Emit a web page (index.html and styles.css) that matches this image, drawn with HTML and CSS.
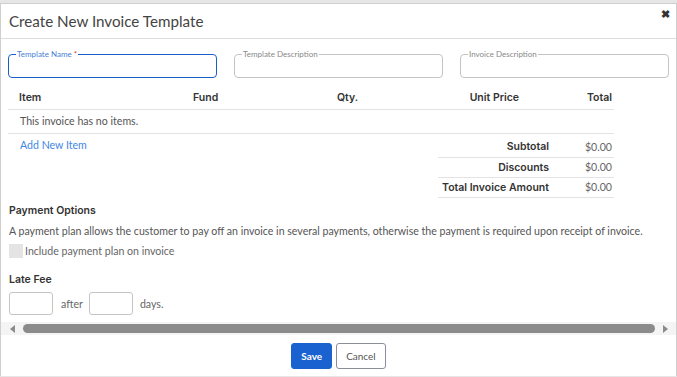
FILE: index.html
```html
<!DOCTYPE html>
<html lang="en">
<head>
    <meta charset="UTF-8">
    <title>Create New Invoice Template</title>
    <link rel="stylesheet" href="styles.css">
</head>
<body>
    <div class="modal">
        <div class="modal-header">
            <h2>Create New Invoice Template</h2>
            <span class="close">&#10006;</span>
        </div>

        <div class="modal-body">
            <div class="fields">
                <fieldset class="field active">
                    <legend>Template Name <span class="req">*</span></legend>
                    <input type="text">
                </fieldset>
                <fieldset class="field">
                    <legend>Template Description</legend>
                    <input type="text">
                </fieldset>
                <fieldset class="field">
                    <legend>Invoice Description</legend>
                    <input type="text">
                </fieldset>
            </div>

            <div class="items">
                <div class="row head">
                    <div class="c-item">Item</div>
                    <div class="c-fund">Fund</div>
                    <div class="c-qty">Qty.</div>
                    <div class="c-price">Unit Price</div>
                    <div class="c-total">Total</div>
                </div>
                <div class="row empty">
                    <div class="c-item">This invoice has no items.</div>
                </div>

                <div class="foot">
                    <a href="#" class="add-link">Add New Item</a>
                    <div class="summary">
                        <div class="sum-row"><span class="sum-label">Subtotal</span><span class="sum-val">$0.00</span></div>
                        <div class="sum-row"><span class="sum-label">Discounts</span><span class="sum-val">$0.00</span></div>
                        <div class="sum-row"><span class="sum-label">Total Invoice Amount</span><span class="sum-val">$0.00</span></div>
                    </div>
                </div>
            </div>

            <h4 class="section">Payment Options</h4>
            <p class="note">A payment plan allows the customer to pay off an invoice in several payments, otherwise the payment is required upon receipt of invoice.</p>
            <label class="check">
                <span class="box"></span>
                Include payment plan on invoice
            </label>

            <h4 class="section late">Late Fee</h4>
            <div class="late-row">
                <input type="text" class="small">
                <span class="after">after</span>
                <input type="text" class="small">
                <span class="days">days.</span>
            </div>
        </div>

        <!-- horizontal scrollbar of the body -->
        <div class="hscroll">
            <span class="arrow left"></span>
            <div class="thumb"></div>
            <span class="arrow right"></span>
        </div>

        <div class="modal-footer">
            <button class="btn primary">Save</button>
            <button class="btn">Cancel</button>
        </div>
    </div>
</body>
</html>
```

FILE: styles.css
```css
body {
    margin: 0;
    background-color: #e6e6e6;
    font-family: 'Lato', 'Noto Sans', sans-serif;
    color: #555;
    font-size: 10.6px;
}
.modal {
    margin-top: 3px;
    height: 373px;
    background-color: #fff;
    border: 1px solid #cfcfcf;
    border-bottom: none;
    box-sizing: border-box;
}
.modal-header {
    height: 34px;
    display: flex;
    align-items: center;
    justify-content: space-between;
    padding: 0 6px 0 8px;
    border-bottom: 1px solid #ddd;
}
.modal-header h2 {
    margin: 0;
    font-size: 15.2px;
    font-weight: 400;
    color: #444;
}
.close {
    font-size: 11px;
    color: #333;
    font-weight: bold;
    margin-top: -14px;
}
.modal-body {
    padding: 11px 7px 0 7px;
}
.fields {
    display: grid;
    grid-template-columns: repeat(3, 1fr);
    gap: 17px;
}
.field {
    margin: 0;
    padding: 0 4px;
    min-width: 0;
    height: 28px;
    border: 1px solid #c4c4c4;
    border-radius: 4px;
    box-sizing: border-box;
}
.field legend {
    font-size: 8px;
    line-height: 8px;
    color: #888;
    padding: 0 1px;
    margin-left: 3px;
}
.field.active {
    border-color: #1a5fc7;
}
.field.active legend {
    color: #4a80d6;
}
.req {
    color: #e03030;
}
.field input {
    border: none;
    outline: none;
    width: 100%;
    height: 16px;
    padding: 0;
    background: transparent;
}
.items {
    width: 606px;
    margin-top: 8px;
}
.row {
    display: grid;
    grid-template-columns: 174px 144px 1fr 110px 84px;
    height: 23px;
    align-items: center;
    border-bottom: 1px solid #e3e3e3;
}
.row > div {
    padding: 0 11px;
}
.row.head {
    font-family: 'Inter', 'Liberation Sans', sans-serif;
    font-weight: 600;
    font-size: 10.5px;
    color: #333;
}
.row.empty {
    display: block;
    line-height: 23px;
}
.row.empty .c-item {
    padding-left: 12px;
}
.row.head .c-price {
    text-align: right;
}
.row.head .c-total {
    text-align: right;
    padding-right: 2px;
}
.foot {
    display: flex;
    justify-content: space-between;
    align-items: flex-start;
}
.add-link {
    color: #3f87e4;
    text-decoration: none;
    margin: 5px 0 0 12px;
}
.summary {
    width: 176px;
    margin-top: 3px;
}
.sum-row {
    display: flex;
    height: 20px;
    padding-bottom: 1px;
    box-sizing: border-box;
    align-items: center;
    border-bottom: 1px solid #e3e3e3;
}
.sum-row:first-child {
    height: 21px;
}
.sum-label {
    flex: 1;
    text-align: right;
    font-family: 'Inter', 'Liberation Sans', sans-serif;
    font-weight: 600;
    font-size: 10.5px;
    color: #333;
    padding-right: 5px;
}
.sum-val {
    width: 58px;
    text-align: right;
    padding-right: 2px;
    color: #666;
}
.section {
    margin: 5px 0 0 1px;
    font-family: 'Inter', 'Liberation Sans', sans-serif;
    font-weight: 600;
    font-size: 10.5px;
    color: #333;
    line-height: 16px;
}
.note {
    margin: 4px 0 0 1px;
    line-height: 16px;
}
.check {
    display: flex;
    align-items: center;
    gap: 2px;
    margin: 5px 0 0 1px;
    color: #666;
}
.box {
    width: 14px;
    height: 14px;
    background-color: #e4e4e4;
    display: inline-block;
}
.section.late {
    margin-top: 14px;
}
.late-row {
    display: flex;
    align-items: center;
    margin: 4px 0 0 1px;
    color: #666;
}
.small {
    width: 44px;
    height: 23px;
    box-sizing: border-box;
    border: 1px solid #c4c4c4;
    border-radius: 3px;
    padding: 0;
}
.after {
    margin: 0 6px 0 8px;
}
.days {
    margin-left: 7px;
}
.hscroll {
    margin-top: 7px;
    height: 13px;
    background-color: #f4f4f4;
    display: flex;
    align-items: center;
    padding: 0 8px 0 9px;
    gap: 8px;
}
.thumb {
    flex: 1;
    height: 9px;
    border-radius: 5px;
    background-color: #8b8b8b;
}
.arrow {
    width: 0;
    height: 0;
    border-top: 4px solid transparent;
    border-bottom: 4px solid transparent;
}
.arrow.left {
    border-right: 5px solid #8b8b8b;
}
.arrow.right {
    border-left: 5px solid #8b8b8b;
}
.modal-footer {
    display: flex;
    justify-content: center;
    gap: 4px;
    margin-top: 8px;
}
.btn {
    height: 26px;
    padding: 0 9px;
    border: 1px solid #8a8f99;
    border-radius: 3px;
    background-color: #fff;
    color: #555;
    font-family: 'Lato', sans-serif;
    font-size: 10px;
    cursor: pointer;
}
.btn.primary {
    background-color: #1a62d0;
    border-color: #1a62d0;
    color: #fff;
    font-weight: bold;
    padding: 0 9px;
}
```
